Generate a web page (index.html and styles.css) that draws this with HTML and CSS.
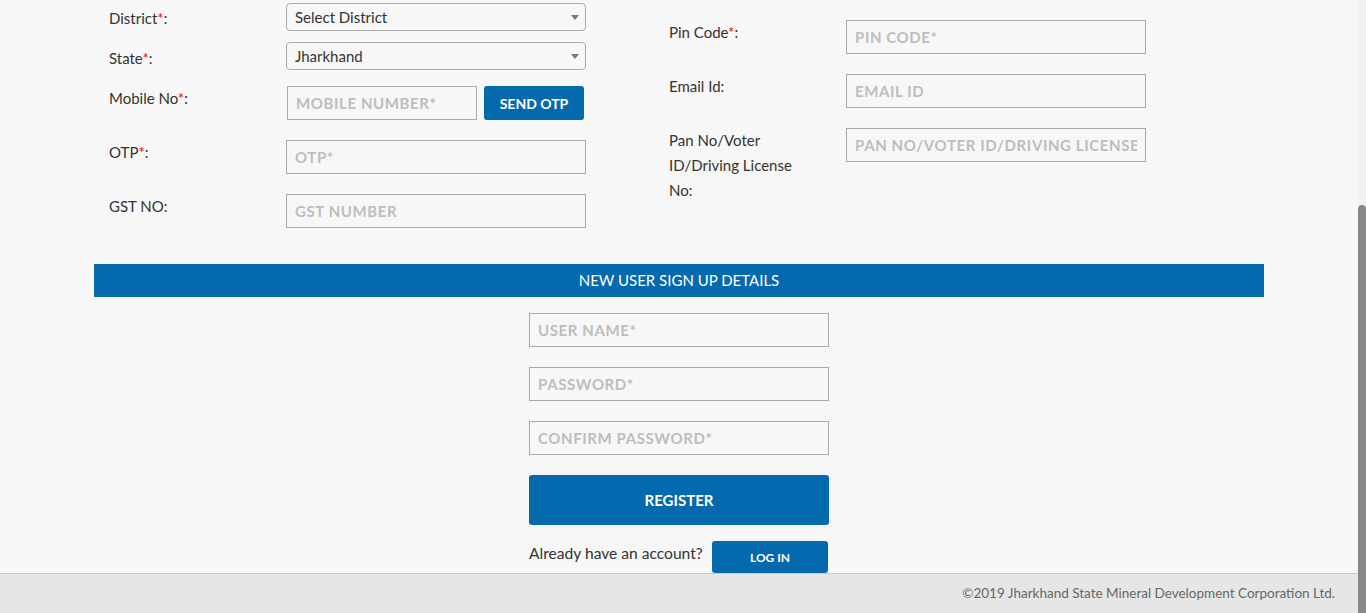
FILE: index.html
```html
<!DOCTYPE html>
<html lang="en">
<head>
<meta charset="utf-8">
<title>JSMDCL - Sign Up</title>
<link rel="stylesheet" href="styles.css">
</head>
<body>
<div class="page">
  <div class="main">
    <div class="content">
      <div class="container">
        <div class="details">
          <div class="col">
            <div class="row row-select row-first">
              <label class="lbl">District<span class="req">*</span>:</label>
              <div class="select-wrap">
                <select class="select"><option>Select District</option></select>
              </div>
            </div>
            <div class="row row-select row-second">
              <label class="lbl">State<span class="req">*</span>:</label>
              <div class="select-wrap">
                <select class="select"><option>Jharkhand</option></select>
              </div>
            </div>
            <div class="row row-mobile">
              <label class="lbl">Mobile No<span class="req">*</span>:</label>
              <div class="mobile-group">
                <input class="input input-mobile" placeholder="MOBILE NUMBER*">
                <button class="btn btn-otp">SEND OTP</button>
              </div>
            </div>
            <div class="row">
              <label class="lbl">OTP<span class="req">*</span>:</label>
              <input class="input" placeholder="OTP*">
            </div>
            <div class="row">
              <label class="lbl">GST NO:</label>
              <input class="input" placeholder="GST NUMBER">
            </div>
          </div>
          <div class="col col-right">
            <div class="row">
              <label class="lbl">Pin Code<span class="req">*</span>:</label>
              <input class="input" placeholder="PIN CODE*">
            </div>
            <div class="row">
              <label class="lbl">Email Id:</label>
              <input class="input" placeholder="EMAIL ID">
            </div>
            <div class="row">
              <label class="lbl lbl-wrap">Pan No/Voter ID/Driving License No:</label>
              <input class="input" placeholder="PAN NO/VOTER ID/DRIVING LICENSE NO">
            </div>
          </div>
        </div>

        <div class="bar">NEW USER SIGN UP DETAILS</div>

        <div class="signup">
          <input class="input" placeholder="USER NAME*">
          <input class="input" type="password" placeholder="PASSWORD*">
          <input class="input" type="password" placeholder="CONFIRM PASSWORD*">
          <button class="btn btn-register">REGISTER</button>
          <div class="login-row">
            <span class="login-text">Already have an account?</span>
            <button class="btn btn-login">LOG IN</button>
          </div>
        </div>
      </div>
    </div>
    <footer class="footer">©2019 Jharkhand State Mineral Development Corporation Ltd.</footer>
  </div>
  <div class="scrollbar">
    <div class="track"></div>
    <div class="thumb"></div>
  </div>
</div>
</body>
</html>
```
FILE: styles.css
```css
* { box-sizing: border-box; }
html, body { margin: 0; padding: 0; }
body {
  background: #f7f7f7;
  font-family: Lato, "Open Sans", sans-serif;
  color: #333;
  overflow: hidden;
}
.page {
  display: flex;
  height: 613px;
}
.main {
  flex: 1;
  display: flex;
  flex-direction: column;
  min-width: 0;
}
.content {
  flex: 1;
}
.container {
  width: 1170px;
  margin: 0 auto;
  padding-top: 3px;
}
.details {
  display: flex;
  padding-left: 15px;
}
.col {
  width: 560px;
  display: flex;
  flex-direction: column;
}
.col-right {
  padding-top: 17px;
}
.row {
  display: flex;
  align-items: flex-start;
  margin-bottom: 20px;
}
.col .row:last-child { margin-bottom: 0; }
.row-first { margin-bottom: 11px; }
.row-second { margin-bottom: 15px; }
.lbl {
  width: 177px;
  flex: none;
  font-size: 15px;
  line-height: 25px;
  color: #333;
}
.row-first .lbl { padding-top: 3px; }
.row-second .lbl { padding-top: 4px; }
.lbl-wrap { width: 150px; margin-right: 27px; }
.req { color: #e00; }

.select-wrap {
  position: relative;
  width: 300px;
  height: 28px;
}
.select-wrap::after {
  content: "";
  position: absolute;
  right: 7px;
  top: 50%;
  margin-top: -2px;
  border-left: 4px solid transparent;
  border-right: 4px solid transparent;
  border-top: 5px solid #777;
}
.select {
  -webkit-appearance: none;
  appearance: none;
  width: 100%;
  height: 100%;
  border: 1px solid #aaa;
  border-radius: 4px;
  background: #f7f7f7;
  font-family: inherit;
  font-size: 15px;
  color: #333;
  padding: 0 8px;
  outline: none;
}

.input {
  display: block;
  width: 300px;
  height: 34px;
  border: 1px solid #aaa;
  border-radius: 0;
  background: #f7f7f7;
  padding: 0 8px;
  font-family: inherit;
  font-size: 15px;
  font-weight: 700;
  color: #333;
  outline: none;
}
.input::placeholder {
  color: #bdbdbd;
  font-weight: 700;
  letter-spacing: 0.6px;
}
.mobile-group {
  display: flex;
  gap: 7px;
  padding-left: 1px;
}
.input-mobile { width: 190px; }

.btn {
  border: none;
  background: #0569ae;
  color: #fff;
  font-family: inherit;
  font-weight: 700;
  border-radius: 3px;
  cursor: pointer;
  padding: 0;
}
.btn-otp {
  width: 100px;
  height: 34px;
  font-size: 14px;
}

.bar {
  margin-top: 36px;
  height: 33px;
  line-height: 32px;
  background: #0569ae;
  color: #fff;
  text-align: center;
  font-size: 15px;
}

.signup {
  width: 300px;
  margin: 16px auto 0;
  display: flex;
  flex-direction: column;
  gap: 20px;
}
.btn-register {
  height: 50px;
  font-size: 15px;
}
.login-row {
  display: flex;
  align-items: flex-start;
  justify-content: space-between;
  margin-top: -4px;
  height: 32px;
}
.login-text {
  font-size: 15.6px;
  line-height: 24px;
  color: #333;
}
.btn-login {
  width: 116px;
  height: 32px;
  font-size: 12px;
  margin-right: 1px;
}

.footer {
  height: 40px;
  border-top: 1px solid #c9c9c9;
  background: #e6e6e6;
  color: #666;
  font-size: 13.5px;
  text-align: right;
  padding-right: 23px;
  line-height: 38px;
}

.scrollbar {
  width: 8px;
  flex: none;
  display: flex;
  flex-direction: column;
  background: #f1f1f1;
}
.track { height: 205px; }
.thumb {
  flex: 1;
  background: #888;
  border-radius: 4px 4px 0 0;
}
```
